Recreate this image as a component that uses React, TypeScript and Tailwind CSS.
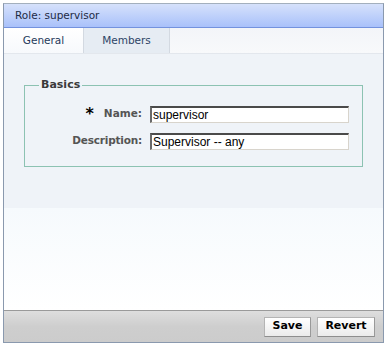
export default function App() {
  return (
    <div className="w-[387px] h-[348px] bg-white pt-[3px] pl-[3px] font-['DejaVu_Sans',Verdana,sans-serif]">
      <div className="w-[381px] h-[340px] border border-[#8a99ae] border-t-[#a3afbd] flex flex-col">
        {/* header */}
        <div className="h-[24px] shrink-0 flex items-center px-[11px] bg-gradient-to-b from-[#d6e1fb] to-[#a9c1fa] border-b border-[#7392de] text-[10.5px] text-[#1d2b45]">
          Role: supervisor
        </div>

        {/* tabs */}
        <div className="h-[26px] shrink-0 flex bg-gradient-to-b from-[#f3f5f9] to-[#f8f9fb] border-b border-[#e3e7ed]">
          <div className="w-[79px] flex items-center justify-center bg-gradient-to-b from-white to-[#f7f9fc] text-[10.5px] text-[#24395a]">
            General
          </div>
          <div className="w-[87px] flex items-center justify-center bg-[#e6ecf3] border-x border-[#d3d9e1] text-[10.5px] text-[#2d4466]">
            Members
          </div>
        </div>

        {/* content */}
        <div className="h-[154px] shrink-0 bg-[#eff3f8] pt-[23px] px-[20px]">
          <fieldset className="border border-[#8cc2b2] h-[90px] pl-[14px] pr-[13px]">
            <legend className="px-[2px] text-[11px] font-bold text-[#3a3a3a]">Basics</legend>
            <div className="mt-[12px] flex flex-col gap-[10px]">
              <div className="flex items-center">
                <div className="w-[103px] flex items-center justify-end gap-[10px] text-[10.5px] font-bold text-[#555]">
                  <span className="text-[16px] leading-none text-black">*</span>
                  <span>Name:</span>
                </div>
                <div className="ml-[8px] w-[199px] h-[17px] border-t-2 border-l-2 border-r border-b border-t-[#4a4a4a] border-l-[#6a6a6a] border-r-[#d8d4cc] border-b-[#d8d4cc] bg-white flex items-center px-[1px] text-[12px] text-black font-['Liberation_Sans',Arial,sans-serif]">
                  supervisor
                </div>
              </div>
              <div className="flex items-center">
                <div className="w-[103px] text-right text-[10.5px] font-bold text-[#555] tracking-[-0.2px]">Description:</div>
                <div className="ml-[8px] w-[199px] h-[17px] border-t-2 border-l-2 border-r border-b border-t-[#4a4a4a] border-l-[#6a6a6a] border-r-[#d8d4cc] border-b-[#d8d4cc] bg-white flex items-center px-[1px] text-[12px] text-black font-['Liberation_Sans',Arial,sans-serif]">
                  Supervisor -- any
                </div>
              </div>
            </div>
          </fieldset>
        </div>

        {/* blank area */}
        <div className="flex-1 bg-gradient-to-b from-[#f6fafd] to-white" />

        {/* footer */}
        <div className="h-[32px] shrink-0 border-t border-[#9a9a9a] bg-gradient-to-b from-[#dedede] via-[#cecece] to-[#cccccc] flex items-center justify-end gap-[6px] pr-[8px]">
          <button className="w-[47px] h-[20px] border border-[#b4b4b4] border-b-[#8e8e8e] border-r-[#999] bg-gradient-to-b from-white to-[#ebebeb] text-[11px] font-bold text-black">
            Save
          </button>
          <button className="w-[58px] h-[20px] border border-[#b4b4b4] border-b-[#8e8e8e] border-r-[#999] bg-gradient-to-b from-white to-[#ebebeb] text-[11px] font-bold text-black">
            Revert
          </button>
        </div>
      </div>
    </div>
  );
}
